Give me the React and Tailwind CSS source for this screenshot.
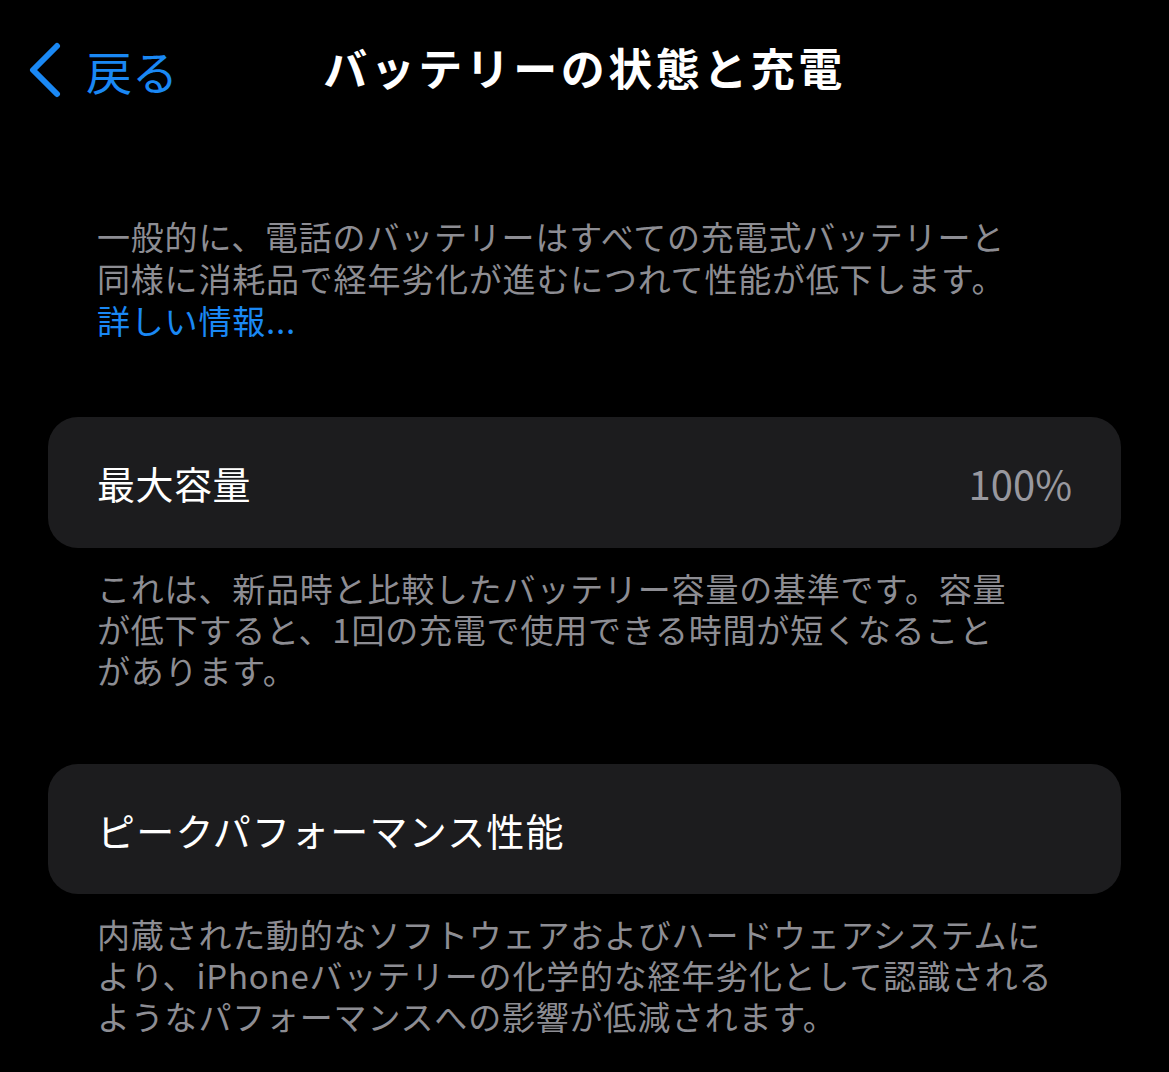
import React from "react";

const font = { fontFamily: '"Noto Sans CJK JP", "Noto Sans", sans-serif' };

const Footnote = ({ lines, className = "" }) => (
    <p className={`px-[97px] text-[33px] leading-[41px] tracking-[0.8px] text-[#8d8d93] ${className}`}>
        {lines.map((l, i) => (
            <React.Fragment key={i}>
                {l}
                {i < lines.length - 1 && <br />}
            </React.Fragment>
        ))}
    </p>
);

const App = () => {
    return (
        <div className="w-[1169px] h-[1072px] bg-black overflow-hidden text-white" style={font}>
            {/* nav bar */}
            <div className="relative h-[140px] flex items-center justify-center">
                <div className="absolute left-[28px] top-[42px] flex items-center gap-[24px] text-[#1a88f4]">
                    <svg width="34" height="56" viewBox="0 0 34 56" fill="none">
                        <path d="M29 4 L5 28 L29 52" stroke="currentColor" strokeWidth="6" strokeLinecap="round" strokeLinejoin="round" />
                    </svg>
                    <span className="text-[46px] leading-none">戻る</span>
                </div>
                <h1 className="-mt-[6px] text-[44px] font-bold tracking-[3.5px] leading-none">バッテリーの状態と充電</h1>
            </div>

            <p className="mt-[75px] px-[97px] text-[33px] leading-[42px] tracking-[0.8px] text-[#8d8d93]">
                一般的に、電話のバッテリーはすべての充電式バッテリーと
                <br />
                同様に消耗品で経年劣化が進むにつれて性能が低下します。
                <br />
                <span className="text-[#1a88f4]">詳しい情報...</span>
            </p>

            <div className="mt-[76px] mx-[48px] h-[131px] rounded-[30px] bg-[#1c1c1e] flex items-center justify-between px-[49px]">
                <span className="text-[38px] tracking-[0.5px]">最大容量</span>
                <span className="text-[40px] text-[#98989f]">100%</span>
            </div>
            <Footnote
                className="mt-[20px]"
                lines={[
                    "これは、新品時と比較したバッテリー容量の基準です。容量",
                    "が低下すると、1回の充電で使用できる時間が短くなること",
                    "があります。",
                ]}
            />

            <div className="mt-[73px] mx-[48px] h-[130px] rounded-[30px] bg-[#1c1c1e] flex items-center px-[49px]">
                <span className="text-[38px] tracking-[1.2px]">ピークパフォーマンス性能</span>
            </div>
            <Footnote
                className="mt-[20px]"
                lines={[
                    "内蔵された動的なソフトウェアおよびハードウェアシステムに",
                    "より、iPhoneバッテリーの化学的な経年劣化として認識される",
                    "ようなパフォーマンスへの影響が低減されます。",
                ]}
            />
        </div>
    );
};

export default App;
